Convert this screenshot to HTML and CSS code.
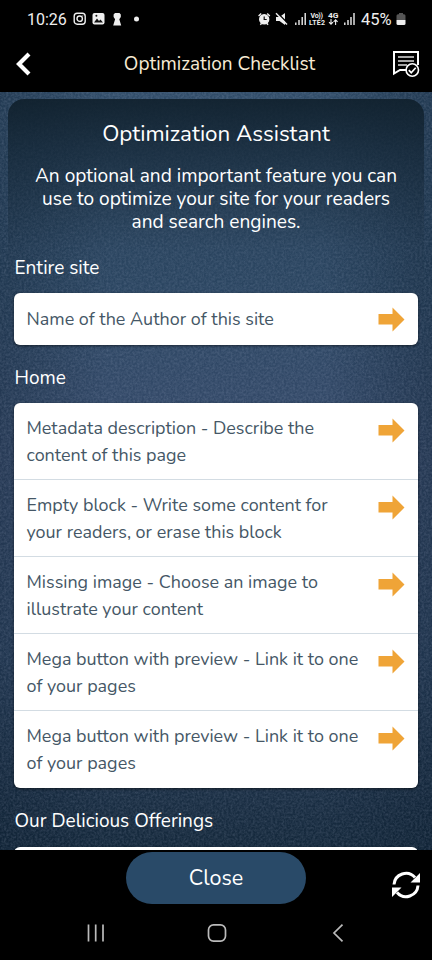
FILE: index.html
```html
<!DOCTYPE html>
<html lang="en">
<head>
<meta charset="utf-8">
<title>Optimization Checklist</title>
<link rel="stylesheet" href="styles.css">
</head>
<body>
<div class="screen">
  <div class="status">
    <span class="clock">10:26</span>
    <svg class="status-left" width="70" height="16" viewBox="0 0 70 16" fill="none" stroke="#eee" stroke-width="1.4">
      <rect x="1.2" y="2.2" width="11" height="11" rx="3"/><circle cx="6.7" cy="7.7" r="2.7"/><circle cx="9.8" cy="4.8" r=".5" fill="#eee" stroke="none"/>
      <rect x="19.5" y="2" width="12" height="11.5" rx="2" fill="#eee" stroke="none"/><path d="M21 11.5l3-4 2 2.5 1.5-1.5 2.5 3z" fill="#111" stroke="none"/><circle cx="23.4" cy="4.8" r="1" fill="#111" stroke="none"/>
      <path d="M42 2h4.500l1.300 1.500v2.500l-1.500 2.200 1.900 6.300h-8l1.900-6.300-1.500-2.200V3.500z" fill="#eee" stroke="none"/>
      <circle cx="63.5" cy="8" r="2.5" fill="#eee" stroke="none"/>
    </svg>
    <svg class="status-right" width="98" height="18" viewBox="257 10 98 18" fill="none" stroke="#eee" stroke-width="1.4">
      <circle cx="264.2" cy="19.2" r="4.5" fill="#eee"/><path d="M258.6 16l2.6-2.6M269.8 16l-2.6-2.6M260.3 24.8l1.4-1.6M268.1 24.8l-1.4-1.6"/><path d="M264.2 16.5v3h2.5" stroke="#111" stroke-width="1.2"/>
      <path d="M276 17h3.5l5.5-4v12l-5.5-4H276z" fill="#eee" stroke="none"/><path d="M277 12.5l12 12" stroke="#000" stroke-width="1.5"/><path d="M276 13.2l11 11.2"/>
      <path d="M295.8 25v-2.5M299 25v-5M302.2 25v-8M305.2 25V13M344.8 25v-2.5M348 25v-5M351 25v-8M354 25V13"/>
      <g class="network"><text x="310.5" y="17.6" textLength="12.5">Vo))</text><text x="309" y="24.8" textLength="16">LTE2</text><text x="328" y="18" textLength="10.5" lengthAdjust="spacingAndGlyphs">4G</text></g>
      <path d="M331 19v5.2m-2-2l2 2 2-2M335.6 25v-5.2m-2 2l2-2 2 2" stroke-width="1.1"/>
    </svg>
    <span class="percent">45%</span>
    <svg class="battery" width="10" height="13" viewBox="0 0 10 13"><path d="M3 0h4v1.3h1a1.5 1.5 0 0 1 1.5 1.5V7H.5V2.800A1.500 1.500 0 0 1 2 1.300h1z" fill="#555"/><path d="M.5 7h9v3.500A1.500 1.500 0 0 1 8 12H2A1.500 1.500 0 0 1 .5 10.500z" fill="#eee"/></svg>
  </div>
  <header class="header">
    <svg class="back" width="16" height="24" viewBox="0 0 16 24" fill="none" stroke="#fff" stroke-width="4.200"><path d="M14 2L4 12l10 10"/></svg>
    <h1 class="title">Optimization Checklist</h1>
    <svg class="checklist" width="28" height="28" viewBox="0 0 28 28" fill="none" stroke="#fff" stroke-width="2"><path d="M14 20H8l-6 3.500V2h24v13"/><path d="M6 7h16M6 11h16M6 15h9" stroke-width="1.400" stroke="#ddd"/><circle cx="20.300" cy="20" r="6.200" fill="#000" stroke-width="1.600"/><path d="M16.800 20.200l2.400 2.500 4.500-5" stroke-width="1.700"/></svg>
  </header>
  <main class="content">
    <svg class="grain" width="432" height="758"><filter id="grain" x="0" y="0" width="100%" height="100%"><feTurbulence type="fractalNoise" baseFrequency=".45" numOctaves="2" seed="4"/><feColorMatrix values="0 0 0 0 .7  0 0 0 0 .75  0 0 0 0 .95  1 0 0 0 -.3"/></filter><rect width="432" height="758" filter="url(#grain)"/></svg>
    <div class="panel">
      <h2 class="heading">Optimization Assistant</h2>
      <p class="intro">An optional and important feature you can<br>use to optimize your site for your readers<br>and search engines.</p>
      <h3 class="section first">Entire site</h3>
      <ul class="card">
        <li class="row single"><span>Name of the Author of this site</span><svg class="arrow" viewBox="0 0 27 25"><path d="M.5 7h14V.5L26.500 12.500 14.500 24.500V17.500H.5z"/></svg></li>
      </ul>
      <h3 class="section home">Home</h3>
      <ul class="card">
        <li class="row"><span>Metadata description - Describe the<br>content of this page</span><svg class="arrow" viewBox="0 0 27 25"><path d="M.5 7h14V.5L26.500 12.500 14.500 24.500V17.500H.5z"/></svg></li>
        <li class="row"><span>Empty block - Write some content for<br>your readers, or erase this block</span><svg class="arrow" viewBox="0 0 27 25"><path d="M.5 7h14V.5L26.500 12.500 14.500 24.500V17.500H.5z"/></svg></li>
        <li class="row"><span>Missing image - Choose an image to<br>illustrate your content</span><svg class="arrow" viewBox="0 0 27 25"><path d="M.5 7h14V.5L26.500 12.500 14.500 24.500V17.500H.5z"/></svg></li>
        <li class="row"><span>Mega button with preview - Link it to one<br>of your pages</span><svg class="arrow" viewBox="0 0 27 25"><path d="M.5 7h14V.5L26.500 12.500 14.500 24.500V17.500H.5z"/></svg></li>
        <li class="row"><span>Mega button with preview - Link it to one<br>of your pages</span><svg class="arrow" viewBox="0 0 27 25"><path d="M.5 7h14V.5L26.500 12.500 14.500 24.500V17.500H.5z"/></svg></li>
      </ul>
      <h3 class="section offerings">Our Delicious Offerings</h3>
      <div class="card next"></div>
    </div>
  </main>
  <footer class="footer">
    <button class="close">Close</button>
    <svg class="refresh" width="28" height="28" viewBox="0 0 28 28" fill="none" stroke="#fff" stroke-width="3"><path d="M2 13.500A12 12 0 0 1 23 6.500M26 14.500A12 12 0 0 1 5 21.500"/><path d="M28 2v9.500h-9.500zM0 26v-9.500h9.500z" fill="#fff" stroke="none"/></svg>
  </footer>
  <nav class="nav">
    <svg width="18" height="18" viewBox="0 0 18 18"><path d="M1.500 .5v17M8.700 .5v17M16 .5v17"/></svg>
    <svg class="nav-home" width="20" height="18" viewBox="0 0 20 18"><rect x="1.500" y=".9" width="17" height="16.200" rx="5"/></svg>
    <svg width="12" height="18" viewBox="0 0 12 18"><path d="M10.500 .7L2 9l8.500 8.300"/></svg>
  </nav>
</div>
</body>
</html>
```
FILE: styles.css
```css
* { box-sizing: border-box; margin: 0; padding: 0; }
body { background: #000; color: #fff; font-family: Nunito, "Noto Sans", sans-serif; overflow: hidden; }
.screen { width: 432px; height: 960px; display: flex; flex-direction: column; background: #000; }
svg { display: block; flex: none; }
.status { height: 38px; display: flex; align-items: center; padding-left: 27px; color: #eee; font: 16px Roboto, sans-serif; }
.clock { width: 46px; }
.status-right { margin-left: 114px; }
.percent { width: 35px; margin-left: 6px; font-size: 16.500px; }
.network { fill: #eee; stroke: none; font: bold 7px Roboto, sans-serif; }
.header { height: 54px; display: flex; align-items: center; padding: 0 12px 3px 15px; justify-content: space-between; }
.title { font-size: 19px; font-weight: 400; color: #f7ead4; white-space: nowrap; margin-left: 16px; }
.content { position: relative; height: 758px; overflow: hidden; padding: 7px 8px 0; background: linear-gradient(90deg, rgba(10,28,46,.35), transparent 25%, transparent 75%, rgba(10,28,46,.4)), linear-gradient(#304c68 0, #2c4763 25%, #364a6a 48%, #2b425f 75%, #192d42 94%, #14283b 100%); }
.grain { position: absolute; left: 0; top: 0; opacity: .24; }
.panel { position: relative; height: 900px; border-radius: 16px; padding: 0 6px; background: linear-gradient(rgba(15,31,43,.9), rgba(18,36,51,.7) 50px, rgba(28,48,68,.15) 150px, transparent 220px); }
.heading { padding-top: 19.500px; text-align: center; font-size: 22.400px; line-height: 30px; font-weight: 400; }
.intro { margin-top: 16.500px; text-align: center; font-size: 19.100px; line-height: 23px; white-space: nowrap; }
.section { padding-left: .5px; font-size: 19px; line-height: 26px; font-weight: 400; }
.first { margin-top: 21px; }
.home { margin-top: 20.500px; }
.offerings { margin-top: 20px; }
.card { background: #fff; border-radius: 6px; list-style: none; margin-top: 11.500px; box-shadow: 0 1px 3px rgba(0,0,0,.5); }
.row { display: flex; justify-content: space-between; height: 77.200px; padding: 12px 13px 0 12.500px; color: #455766; font-size: 17.950px; line-height: 27px; white-space: nowrap; border-bottom: 1px solid #d3dce3; }
.row:last-child { border: 0; }
.row.single { height: 52px; padding-top: 13.500px; }
.arrow { width: 27px; height: 25px; margin-top: 3px; fill: #efa437; }
.single .arrow { margin-top: 1px; }
.next { height: 40px; margin-top: 13px; }
.footer { height: 55px; display: flex; align-items: center; padding: 0 12px 0 126px; justify-content: space-between; }
.close { width: 180px; height: 52px; border: 0; border-radius: 26px; background: #294a68; color: #fff; font: 21.500px Nunito, "Noto Sans", sans-serif; }
.refresh { margin-top: 14px; }
.nav { height: 55px; display: flex; padding: 19px 88px 0 87px; justify-content: space-between; }
.nav-home { margin-right: 4px; }
.nav svg { fill: none; stroke: #bbb; stroke-width: 1.700; }
```
